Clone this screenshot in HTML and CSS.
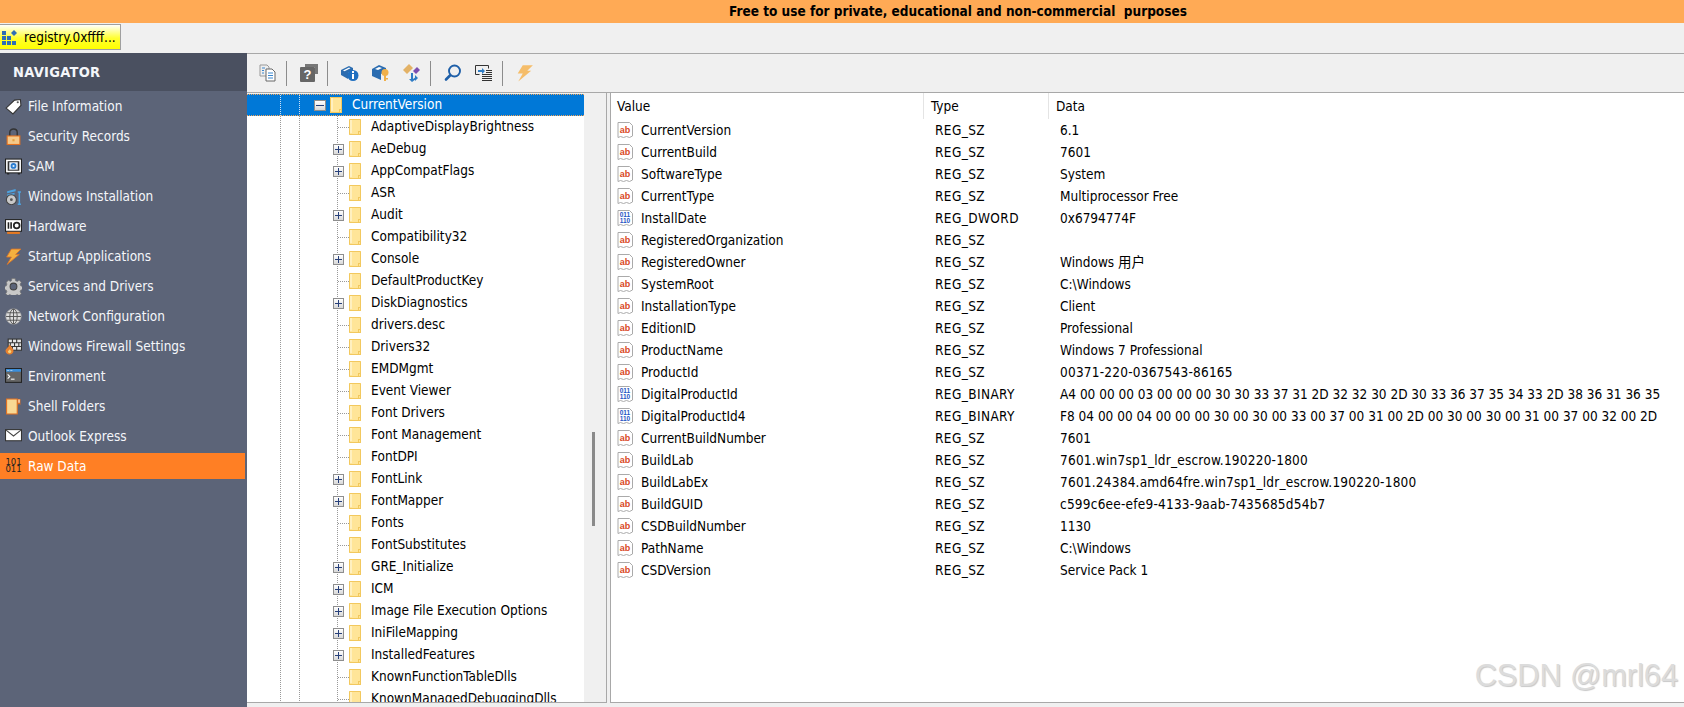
FILE: index.html
```html
<!DOCTYPE html>
<html lang="en">
<head>
<meta charset="utf-8">
<title>Registry viewer</title>
<link rel="stylesheet" href="styles.css">
</head>
<body>
<svg class="defs" width="0" height="0" aria-hidden="true">
  <defs>
    <symbol id="i-tab" viewBox="0 0 15 15"><path fill="#2f6fb5" d="M0 1h4v4H0zM0 6h4v4H0zM0 11h4v4H0zM5 6h4v4H5zM5 11h4v4H5zM10 11h4v4h-4z"/><path fill="#2f6fb5" d="M12 0l3 3-3 3-3-3z"/></symbol>
    <symbol id="i-tag" viewBox="0 0 16 16"><path fill="#fff" stroke="#333" d="M1 9.500 9 2l5.500-.5L15 7l-7.500 8z"/><circle cx="12" cy="4" r="1" fill="#555"/></symbol>
    <symbol id="i-lock" viewBox="0 0 16 16"><path fill="none" stroke="#333" stroke-width="1.300" d="M4.500 8V4c0-4 7-4 7 0v4"/><rect x="2" y="7.500" width="12" height="8" fill="#f5c98a" stroke="#e4701e"/><rect x="7" y="10.500" width="2" height="2" fill="#e4a040"/></symbol>
    <symbol id="i-safe" viewBox="0 0 16 16"><rect x=".5" y="1" width="15" height="13" fill="#fff" stroke="#222"/><rect x="2.500" y="3" width="11" height="9" fill="#333"/><rect x="4" y="4" width="8" height="7" fill="#e8f0fa"/><circle cx="8" cy="7.500" r="2.700" fill="#2b7dd0"/><circle cx="8" cy="7.500" r="1" fill="#e8f0fa"/><path fill="#222" d="M2 14h2v1.500H2zM12 14h2v1.500h-2z"/></symbol>
    <symbol id="i-inst" viewBox="0 0 16 16"><path fill="#4da3e0" d="M2 3l8-2v2l-8 2zM2 6l7-1.500V6L2 8zM12 3h3v1.500h-.8v10H15V16h-3v-1.500h.8v-10H12z"/><circle cx="6" cy="11" r="4.700" fill="#c9c9c9" stroke="#444"/><circle cx="6" cy="11" r="1.300" fill="#555"/></symbol>
    <symbol id="i-hw" viewBox="0 0 16 16"><rect x=".5" y="1.500" width="15" height="11" fill="#fff" stroke="#222"/><path fill="#222" d="M2.500 4H4v6H2.500zM5 4h1.500v6H5z"/><circle cx="11" cy="7" r="2.700" fill="none" stroke="#222" stroke-width="1.600"/><path fill="#e77a22" d="M2 13h12v2H2z"/></symbol>
    <symbol id="i-bolt" viewBox="0 0 16 16"><path fill="#f5b13f" stroke="#d9742a" stroke-width=".8" d="M6 1h9L10 6h3.500L2 15.500 6 8.500H1.500z"/></symbol>
    <symbol id="i-gear" viewBox="0 0 16 16"><path fill="#c8c8c8" stroke="#777" stroke-width=".7" d="M6.500 .5h3l.4 2 1.700.7 1.700-1.100 2 2-1.100 1.700.7 1.700 2 .4v3l-2 .4-.7 1.700 1.100 1.700-2 2-1.700-1.100-1.700.7-.4 2h-3l-.4-2-1.700-.7-1.700 1.100-2-2 1.100-1.700-.7-1.700-2-.4v-3l2-.4.7-1.700L1.300 4l2-2L5 3.200l1.100-.7z"/><circle cx="8" cy="8" r="3.200" fill="#5c6478" stroke="#444"/></symbol>
    <symbol id="i-globe" viewBox="0 0 16 16"><circle cx="8" cy="8" r="7.300" fill="#ddd" stroke="#999" stroke-width=".6"/><path fill="none" stroke="#555" stroke-width=".9" d="M8 1v14M1 8h14M2 4.500h12M2 11.500h12"/><ellipse cx="8" cy="8" rx="3.500" ry="7" fill="none" stroke="#555" stroke-width=".9"/></symbol>
    <symbol id="i-wall" viewBox="0 0 16 16"><rect x="3" y="1" width="12.500" height="10.500" fill="#e6e6e6" stroke="#333"/><path fill="none" stroke="#333" d="M3 4.500h12M3 8h12M7 1v3.500M11 1v3.500M5 4.500V8M9 4.500V8M13 4.500V8M7 8v3.500M11 8v3.500"/><path fill="#e8812f" d="M4.500 6c1 2 3.500 3.500 3.500 6.300a3.800 3.800 0 0 1-7.500 0C.5 10 3 9 4.500 6z"/><path fill="#f8d47a" d="M4.500 10.500c.6 1 1.500 1.500 1.500 2.500a1.700 1.700 0 0 1-3.300 0c0-1 1.300-1.500 1.800-2.500z"/></symbol>
    <symbol id="i-term" viewBox="0 0 16 16"><rect x=".5" y=".5" width="15" height="13" fill="#666" stroke="#222"/><path fill="#3a8fdc" d="M1 1h14v2.500H1z"/><path fill="#fff" d="M2 2h2v.7H2zM5 2h2v.7H5z"/><path fill="none" stroke="#fff" d="M2.500 6l2 2-2 2"/><path fill="#fff" d="M5.500 10h3.500v1H5.500z"/></symbol>
    <symbol id="i-sfold" viewBox="0 0 16 16"><path fill="#f8d894" stroke="#e4701e" d="M1.500 1h10v14h-10z"/><path fill="#e4701e" d="M12 1h2.500v5.500L13.200 5.500 12 6.500z"/><path fill="#fff" d="M12.700 1.500h1v3h-1z"/></symbol>
    <symbol id="i-mail" viewBox="0 0 16 16"><rect x=".5" y="1.500" width="15" height="10.500" fill="#fff" stroke="#333"/><path fill="none" stroke="#444" d="M1 2l7 5.500L15 2"/></symbol>
    <symbol id="i-folder" viewBox="0 0 12 16"><path fill="#ffe598" d="M0 0h12v16H0z"/><path fill="#fff0c0" d="M1 1h2v13H1z"/><path fill="none" stroke="#f2c85e" d="M.5.500h11v15H.5z"/><path fill="#f2c85e" d="M9 12h3v4H9z"/><path fill="#ffe598" d="M10 13h1v2h-1z"/></symbol>
    <symbol id="i-sz" viewBox="0 0 16 16"><path fill="#fff" stroke="#aaa" d="M1 .5h11.500l3 3V14l-3 1.500-3-1-3 1-3-1-2.500 1z"/><text x="8" y="10.500" text-anchor="middle" class="icon-ab">ab</text></symbol>
    <symbol id="i-bin" viewBox="0 0 16 16"><path fill="#fff" stroke="#aaa" d="M1 .5h11.500l3 3V14l-3 1.500-3-1-3 1-3-1-2.500 1z"/><text x="8" y="7" text-anchor="middle" class="icon-bin">011</text><text x="8" y="13" text-anchor="middle" class="icon-bin">110</text></symbol>
    <symbol id="t-copy" viewBox="0 0 18 18"><path fill="#eee" stroke="#999" d="M1 1h7l2 2v9H1z"/><path fill="#fff" stroke="#666" d="M7 5h6l3 3v9H7z"/><path stroke="#3b87cf" stroke-width="1.200" d="M9 9h5M9 11.500h5M9 14h5M3 4h3M3 6.500h2M3 9h2"/></symbol>
    <symbol id="t-help" viewBox="0 0 18 18"><path fill="#777" d="M5 0h13v10h-3V3H5z"/><rect y="3" width="15" height="15" rx="1" fill="#666"/><text x="7.500" y="15" text-anchor="middle" class="icon-help">?</text></symbol>
    <symbol id="t-info" viewBox="0 0 18 18"><path fill="#2b6cb0" d="M0 6l8-4 4 2v3L7 9v6L0 11z"/><path fill="#fff" d="M2 6.500l6-3 1.500.8-6 3z"/><circle cx="12" cy="11.500" r="5.500" fill="#1f6fc0"/><path fill="#fff" d="M11 10h2v5h-2zM11 7h2v2h-2z"/></symbol>
    <symbol id="t-key" viewBox="0 0 18 18"><path fill="#2b6cb0" d="M0 5l7-4 7 3v3l-5 3v6l-9-4z"/><path fill="#fff" d="M3 5l4-2 3 1-4 2z"/><circle cx="13" cy="8.500" r="3.500" fill="#f0b04a"/><path fill="#f0b04a" d="M12 11h2v6h-2zM14 14h2v1.500h-2z"/></symbol>
    <symbol id="t-arrows" viewBox="0 0 18 18"><path fill="#e3b266" d="M0 6l6-6 4 4-6 6z"/><path fill="#7b4fb0" d="M10 7l4-4 3 3-4 4z"/><path fill="#2f7cc4" d="M8 9h2v6l3-2v2l-4 3-3-3h2zM12 11l3 3-3 3z"/></symbol>
    <symbol id="t-search" viewBox="0 0 18 18"><circle cx="10.500" cy="7" r="5.500" fill="none" stroke="#1e5fa8" stroke-width="1.900"/><path stroke="#1e5fa8" stroke-width="2.600" stroke-linecap="round" d="M6 11.500l-4 4"/></symbol>
    <symbol id="t-list" viewBox="0 0 18 18"><path fill="none" stroke="#333" d="M.5 1.500h13v3M.5 1.500v9h4"/><path fill="#2f7cc4" d="M3 6h4V4l3 3-3 3V8H3z"/><path stroke="#333" d="M7 10.500h10M7 12.500h10M7 14.500h10M7 16.500h10M11 6.500h6M11 8.500h6"/></symbol>
    <symbol id="t-bolt" viewBox="0 0 16 16"><path fill="#f5bd6a" d="M6 1h9L10 6h3.500L2 15.500 6 8.500H1.500z"/></symbol>
  </defs>
</svg>

<header class="banner">Free to use for private, educational and non-commercial  purposes</header>

<div class="tabbar">
  <div class="tab"><svg class="tab-icon"><use href="#i-tab"/></svg><span>registry.0xffff...</span></div>
</div>

<div class="main">
  <aside class="nav">
    <h1 class="nav-title">NAVIGATOR</h1>
    <ul class="nav-list">
      <li class="nav-item"><svg class="nav-icon"><use href="#i-tag"/></svg><span>File Information</span></li>
      <li class="nav-item"><svg class="nav-icon"><use href="#i-lock"/></svg><span>Security Records</span></li>
      <li class="nav-item"><svg class="nav-icon"><use href="#i-safe"/></svg><span>SAM</span></li>
      <li class="nav-item"><svg class="nav-icon"><use href="#i-inst"/></svg><span>Windows Installation</span></li>
      <li class="nav-item"><svg class="nav-icon"><use href="#i-hw"/></svg><span>Hardware</span></li>
      <li class="nav-item"><svg class="nav-icon"><use href="#i-bolt"/></svg><span>Startup Applications</span></li>
      <li class="nav-item"><svg class="nav-icon"><use href="#i-gear"/></svg><span>Services and Drivers</span></li>
      <li class="nav-item"><svg class="nav-icon"><use href="#i-globe"/></svg><span>Network Configuration</span></li>
      <li class="nav-item"><svg class="nav-icon"><use href="#i-wall"/></svg><span>Windows Firewall Settings</span></li>
      <li class="nav-item"><svg class="nav-icon"><use href="#i-term"/></svg><span>Environment</span></li>
      <li class="nav-item"><svg class="nav-icon"><use href="#i-sfold"/></svg><span>Shell Folders</span></li>
      <li class="nav-item"><svg class="nav-icon"><use href="#i-mail"/></svg><span>Outlook Express</span></li>
      <li class="nav-item nav-item-active"><span class="nav-bits">101<br>011</span><span>Raw Data</span></li>
    </ul>
  </aside>

  <section class="workspace">
    <div class="toolbar">
      <svg class="tool"><use href="#t-copy"/></svg>
      <i class="sep"></i>
      <svg class="tool"><use href="#t-help"/></svg>
      <i class="sep"></i>
      <svg class="tool"><use href="#t-info"/></svg>
      <svg class="tool tool-wide"><use href="#t-key"/></svg>
      <svg class="tool tool-wide"><use href="#t-arrows"/></svg>
      <i class="sep"></i>
      <svg class="tool"><use href="#t-search"/></svg>
      <svg class="tool tool-wide"><use href="#t-list"/></svg>
      <i class="sep"></i>
      <svg class="tool"><use href="#t-bolt"/></svg>
    </div>

    <div class="panes">
      <div class="tree-pane">
        <div class="tree">
          <div class="node node-root"><span class="box box-minus"></span><svg class="folder"><use href="#i-folder"/></svg><span class="label">CurrentVersion</span></div>
          <div class="node"><span class="leaf"></span><svg class="folder"><use href="#i-folder"/></svg><span>AdaptiveDisplayBrightness</span></div>
          <div class="node"><span class="box"></span><svg class="folder"><use href="#i-folder"/></svg><span>AeDebug</span></div>
          <div class="node"><span class="box"></span><svg class="folder"><use href="#i-folder"/></svg><span>AppCompatFlags</span></div>
          <div class="node"><span class="leaf"></span><svg class="folder"><use href="#i-folder"/></svg><span>ASR</span></div>
          <div class="node"><span class="box"></span><svg class="folder"><use href="#i-folder"/></svg><span>Audit</span></div>
          <div class="node"><span class="leaf"></span><svg class="folder"><use href="#i-folder"/></svg><span>Compatibility32</span></div>
          <div class="node"><span class="box"></span><svg class="folder"><use href="#i-folder"/></svg><span>Console</span></div>
          <div class="node"><span class="leaf"></span><svg class="folder"><use href="#i-folder"/></svg><span>DefaultProductKey</span></div>
          <div class="node"><span class="box"></span><svg class="folder"><use href="#i-folder"/></svg><span>DiskDiagnostics</span></div>
          <div class="node"><span class="leaf"></span><svg class="folder"><use href="#i-folder"/></svg><span>drivers.desc</span></div>
          <div class="node"><span class="leaf"></span><svg class="folder"><use href="#i-folder"/></svg><span>Drivers32</span></div>
          <div class="node"><span class="leaf"></span><svg class="folder"><use href="#i-folder"/></svg><span>EMDMgmt</span></div>
          <div class="node"><span class="leaf"></span><svg class="folder"><use href="#i-folder"/></svg><span>Event Viewer</span></div>
          <div class="node"><span class="leaf"></span><svg class="folder"><use href="#i-folder"/></svg><span>Font Drivers</span></div>
          <div class="node"><span class="leaf"></span><svg class="folder"><use href="#i-folder"/></svg><span>Font Management</span></div>
          <div class="node"><span class="leaf"></span><svg class="folder"><use href="#i-folder"/></svg><span>FontDPI</span></div>
          <div class="node"><span class="box"></span><svg class="folder"><use href="#i-folder"/></svg><span>FontLink</span></div>
          <div class="node"><span class="box"></span><svg class="folder"><use href="#i-folder"/></svg><span>FontMapper</span></div>
          <div class="node"><span class="leaf"></span><svg class="folder"><use href="#i-folder"/></svg><span>Fonts</span></div>
          <div class="node"><span class="leaf"></span><svg class="folder"><use href="#i-folder"/></svg><span>FontSubstitutes</span></div>
          <div class="node"><span class="box"></span><svg class="folder"><use href="#i-folder"/></svg><span>GRE_Initialize</span></div>
          <div class="node"><span class="box"></span><svg class="folder"><use href="#i-folder"/></svg><span>ICM</span></div>
          <div class="node"><span class="box"></span><svg class="folder"><use href="#i-folder"/></svg><span>Image File Execution Options</span></div>
          <div class="node"><span class="box"></span><svg class="folder"><use href="#i-folder"/></svg><span>IniFileMapping</span></div>
          <div class="node"><span class="box"></span><svg class="folder"><use href="#i-folder"/></svg><span>InstalledFeatures</span></div>
          <div class="node"><span class="leaf"></span><svg class="folder"><use href="#i-folder"/></svg><span>KnownFunctionTableDlls</span></div>
          <div class="node"><span class="leaf"></span><svg class="folder"><use href="#i-folder"/></svg><span>KnownManagedDebuggingDlls</span></div>
        </div>
        <div class="scrollbar"><div class="thumb"></div></div>
      </div>

      <div class="list-pane">
        <div class="list-head row">
          <span class="head-cell head-value">Value</span>
          <span class="head-cell head-type">Type</span>
          <span class="head-cell head-data">Data</span>
        </div>
        <div class="row"><span class="name"><svg class="vicon"><use href="#i-sz"/></svg>CurrentVersion</span><span class="cell">REG_SZ</span><span class="cell">6.1</span></div>
        <div class="row"><span class="name"><svg class="vicon"><use href="#i-sz"/></svg>CurrentBuild</span><span class="cell">REG_SZ</span><span class="cell">7601</span></div>
        <div class="row"><span class="name"><svg class="vicon"><use href="#i-sz"/></svg>SoftwareType</span><span class="cell">REG_SZ</span><span class="cell">System</span></div>
        <div class="row"><span class="name"><svg class="vicon"><use href="#i-sz"/></svg>CurrentType</span><span class="cell">REG_SZ</span><span class="cell">Multiprocessor Free</span></div>
        <div class="row"><span class="name"><svg class="vicon"><use href="#i-bin"/></svg>InstallDate</span><span class="cell">REG_DWORD</span><span class="cell">0x6794774F</span></div>
        <div class="row"><span class="name"><svg class="vicon"><use href="#i-sz"/></svg>RegisteredOrganization</span><span class="cell">REG_SZ</span><span class="cell"></span></div>
        <div class="row"><span class="name"><svg class="vicon"><use href="#i-sz"/></svg>RegisteredOwner</span><span class="cell">REG_SZ</span><span class="cell">Windows 用户</span></div>
        <div class="row"><span class="name"><svg class="vicon"><use href="#i-sz"/></svg>SystemRoot</span><span class="cell">REG_SZ</span><span class="cell">C:\Windows</span></div>
        <div class="row"><span class="name"><svg class="vicon"><use href="#i-sz"/></svg>InstallationType</span><span class="cell">REG_SZ</span><span class="cell">Client</span></div>
        <div class="row"><span class="name"><svg class="vicon"><use href="#i-sz"/></svg>EditionID</span><span class="cell">REG_SZ</span><span class="cell">Professional</span></div>
        <div class="row"><span class="name"><svg class="vicon"><use href="#i-sz"/></svg>ProductName</span><span class="cell">REG_SZ</span><span class="cell">Windows 7 Professional</span></div>
        <div class="row"><span class="name"><svg class="vicon"><use href="#i-sz"/></svg>ProductId</span><span class="cell">REG_SZ</span><span class="cell cell-long">00371-220-0367543-86165</span></div>
        <div class="row"><span class="name"><svg class="vicon"><use href="#i-bin"/></svg>DigitalProductId</span><span class="cell">REG_BINARY</span><span class="cell">A4 00 00 00 03 00 00 00 30 30 33 37 31 2D 32 32 30 2D 30 33 36 37 35 34 33 2D 38 36 31 36 35</span></div>
        <div class="row"><span class="name"><svg class="vicon"><use href="#i-bin"/></svg>DigitalProductId4</span><span class="cell">REG_BINARY</span><span class="cell">F8 04 00 00 04 00 00 00 30 00 30 00 33 00 37 00 31 00 2D 00 30 00 30 00 31 00 37 00 32 00 2D</span></div>
        <div class="row"><span class="name"><svg class="vicon"><use href="#i-sz"/></svg>CurrentBuildNumber</span><span class="cell">REG_SZ</span><span class="cell">7601</span></div>
        <div class="row"><span class="name"><svg class="vicon"><use href="#i-sz"/></svg>BuildLab</span><span class="cell">REG_SZ</span><span class="cell cell-long">7601.win7sp1_ldr_escrow.190220-1800</span></div>
        <div class="row"><span class="name"><svg class="vicon"><use href="#i-sz"/></svg>BuildLabEx</span><span class="cell">REG_SZ</span><span class="cell cell-long">7601.24384.amd64fre.win7sp1_ldr_escrow.190220-1800</span></div>
        <div class="row"><span class="name"><svg class="vicon"><use href="#i-sz"/></svg>BuildGUID</span><span class="cell">REG_SZ</span><span class="cell cell-long">c599c6ee-efe9-4133-9aab-7435685d54b7</span></div>
        <div class="row"><span class="name"><svg class="vicon"><use href="#i-sz"/></svg>CSDBuildNumber</span><span class="cell">REG_SZ</span><span class="cell">1130</span></div>
        <div class="row"><span class="name"><svg class="vicon"><use href="#i-sz"/></svg>PathName</span><span class="cell">REG_SZ</span><span class="cell">C:\Windows</span></div>
        <div class="row"><span class="name"><svg class="vicon"><use href="#i-sz"/></svg>CSDVersion</span><span class="cell">REG_SZ</span><span class="cell">Service Pack 1</span></div>
      </div>
    </div>
  </section>
</div>
<div class="watermark">CSDN @mrl64</div>
</body>
</html>
```
FILE: styles.css
```css
* { box-sizing: border-box; }
html, body { margin: 0; height: 100%; }
body {
  height: 707px;
  overflow: hidden;
  display: flex;
  flex-direction: column;
  position: relative;
  background: #f0f0f0;
  color: #000;
  font: 13.500px/22px "DejaVu Sans Condensed", "Noto Sans", "Noto Sans CJK SC", sans-serif;
}
.defs { position: absolute; }
.banner {
  height: 23px;
  flex: none;
  padding-left: 232px;
  background: #ffaa55;
  font-weight: bold;
  line-height: 23px;
  text-align: center;
  white-space: pre;
}
.tabbar { height: 30px; flex: none; padding-top: 1px; }
.tab {
  width: 121px;
  height: 26px;
  display: flex;
  align-items: center;
  gap: 7px;
  padding-left: 2px;
  border: 1px solid #a0a0a0;
  border-left: 0;
  background: linear-gradient(#ffffff, #ffff30 55%, #ffff00);
  white-space: nowrap;
}
.tab-icon { width: 15px; height: 15px; flex: none; }

.main { flex: 1; min-height: 0; display: flex; }

.nav { width: 247px; flex: none; background: #5c6478; color: #f4f6fa; }
.nav-title {
  height: 38px;
  margin: 0;
  padding-left: 13px;
  background: #4a5060;
  font-size: 14.500px;
  font-weight: bold;
  line-height: 38px;
  letter-spacing: .3px;
}
.nav-list { list-style: none; margin: 0; padding: 2px 0 0; }
.nav-item {
  height: 26px;
  margin: 0 2px 4px 0;
  display: flex;
  align-items: center;
  gap: 6px;
  padding-left: 5px;
}
.nav-item-active { background: #ff7f24; color: #fff; }
.nav-icon { width: 17px; height: 17px; flex: none; }
.nav-bits {
  width: 17px;
  flex: none;
  font: 8.500px/7px "DejaVu Sans", sans-serif;
  color: #222;
  text-align: center;
}

.workspace { flex: 1; min-width: 0; display: flex; flex-direction: column; }
.toolbar {
  height: 40px;
  flex: none;
  display: flex;
  align-items: center;
  padding-left: 12px;
  border-top: 1px solid #a8a8a8;
  border-bottom: 1px solid #a8a8a8;
}
.tool { width: 18px; height: 18px; flex: none; margin: 0 9px 0 0; }
.tool-wide { margin-left: 4px; }
.sep { width: 1px; height: 25px; flex: none; background: #8c8c8c; margin-right: 13px; }

.panes { flex: 1; min-height: 0; display: flex; margin-bottom: 4px; }

.tree-pane {
  width: 360px;
  flex: none;
  display: flex;
  margin-right: 3px;
  padding-top: 1px;
  border-right: 1px solid #a8a8a8;
  border-bottom: 1px solid #a8a8a8;
}
.tree {
  width: 337px;
  flex: none;
  overflow: hidden;
  white-space: nowrap;
  background:
    linear-gradient(#999 1px, transparent 1px) 33px 0 / 1px 2px repeat-y,
    linear-gradient(#999 1px, transparent 1px) 52px 0 / 1px 2px repeat-y,
    linear-gradient(#999 1px, transparent 1px) 90px 22px / 1px 2px repeat-y,
    #fff;
}
.node {
  height: 22px;
  display: flex;
  align-items: center;
  padding-left: 86px;
}
.node > span:last-child { padding-bottom: 2px; }
.node-root {
  padding-left: 67px;
  border: 1px dotted #f3a65a;
  border-width: 1px 0;
  color: #fff;
  background:
    linear-gradient(#cfe0f5 1px, transparent 1px) 33px 0 / 1px 2px repeat-y,
    linear-gradient(#cfe0f5 1px, transparent 1px) 52px 0 / 1px 2px repeat-y,
    #0078d7;
}
.node-root > .label { padding-bottom: 0; }
.node-root .folder { margin-left: 4px; margin-right: 10px; }
.box {
  width: 11px;
  height: 11px;
  flex: none;
  position: relative;
  border: 1px solid #8e8e8e;
  background: linear-gradient(#fff, #d8d8d8);
}
.box::before, .box::after { content: ""; position: absolute; background: #27407a; }
.box::before { left: 1px; right: 1px; top: 4px; height: 1px; }
.box::after { left: 4px; top: 1px; bottom: 1px; width: 1px; }
.box-minus { width: 12px; }
.box-minus::after { display: none; }
.leaf {
  width: 11px;
  height: 1px;
  flex: none;
  margin-left: 5px;
  margin-right: -5px;
  background: linear-gradient(90deg, #999 1px, transparent 1px) 0 0 / 2px 1px repeat-x;
}
.folder { width: 12px; height: 16px; flex: none; margin-left: 5px; margin-right: 10px; }

.scrollbar { flex: 1; padding: 338px 0 0 8px; background: #f0f0f0; }
.thumb { width: 3px; height: 94px; background: #8a8a8a; }

.list-pane {
  flex: 1;
  min-width: 0;
  overflow: hidden;
  background: #fff;
  border-left: 1px solid #a8a8a8;
  border-bottom: 1px solid #a8a8a8;
  white-space: nowrap;
}
.row {
  height: 22px;
  display: grid;
  grid-template-columns: 313px 125px 1fr;
  align-items: center;
}
.list-head { height: 26px; }
.head-cell { height: 26px; line-height: 26px; padding-left: 7px; border-right: 1px solid #e4e4e4; }
.head-value { padding-left: 6px; }
.head-data { border-right: 0; }
.name { display: flex; align-items: center; gap: 8px; padding-left: 6px; }
.vicon { width: 16px; height: 16px; flex: none; }
.cell { padding-left: 11px; }
.cell:nth-child(2) { letter-spacing: .4px; }
.cell-long { letter-spacing: .22px; }
.icon-ab { font: bold 9px "Liberation Sans", sans-serif; fill: #d9481e; }
.icon-bin { font: bold 6.500px "Liberation Sans", sans-serif; fill: #1f55c4; }
.icon-help { font: bold 13px "Liberation Sans", sans-serif; fill: #fff; }

.watermark {
  position: absolute;
  right: 6px;
  bottom: 15px;
  font: 30.700px/32px "Liberation Sans", sans-serif;
  color: #dcdcdc;
  text-shadow: 1px 1px 1px #c8c8c8, -1px -1px 0 #fff;
}
```
